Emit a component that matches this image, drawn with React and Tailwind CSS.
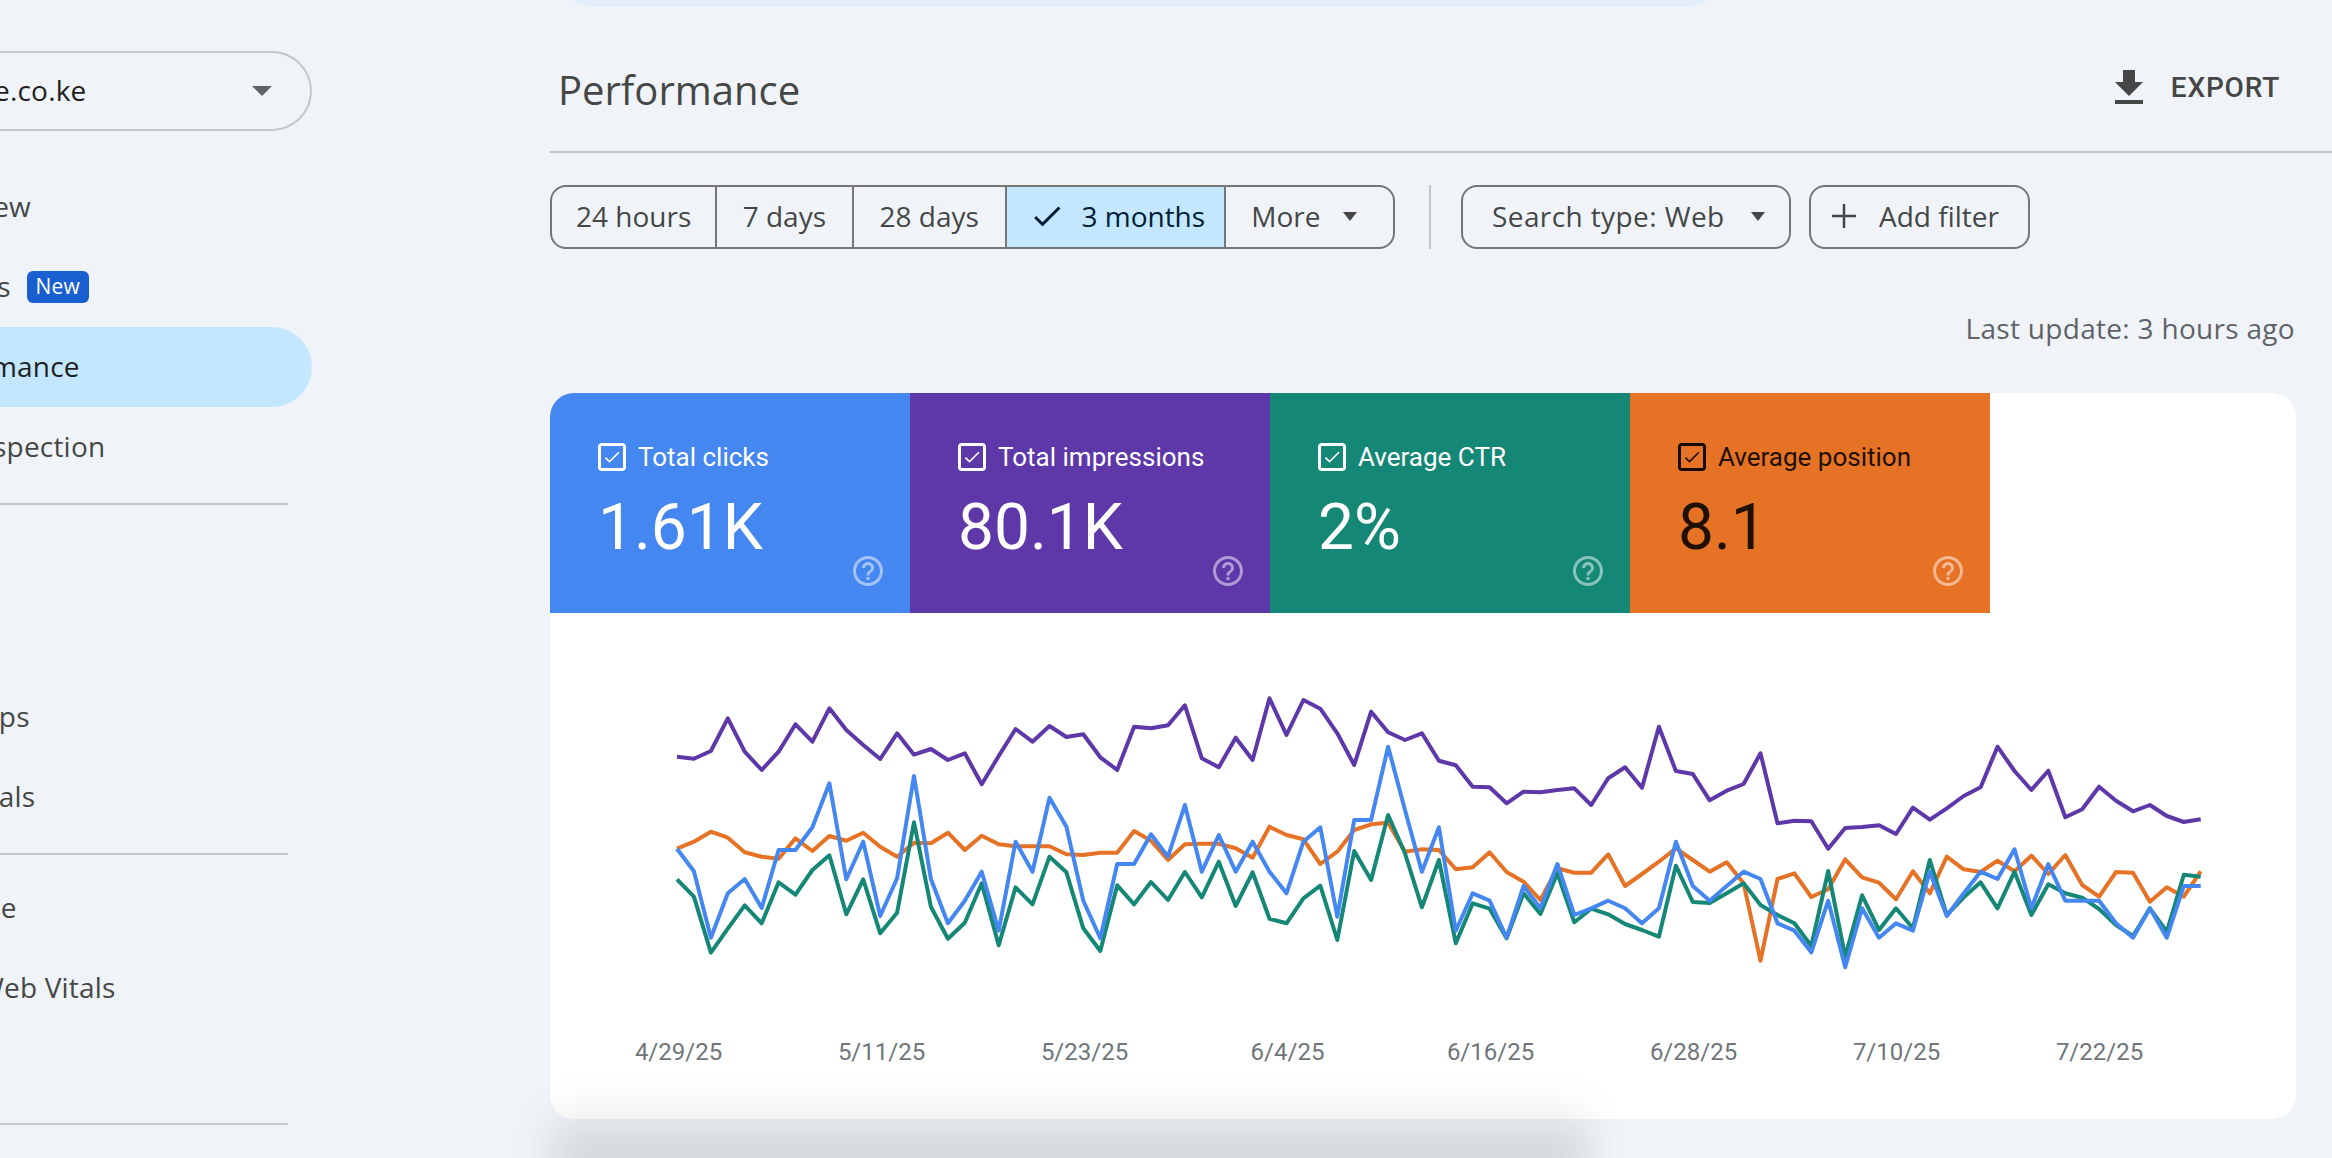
const purple = [260,266,243,145,245,300,245,163,215,115,180,225,267,190,254,237,270,250,343,258,177,215,168,201,193,262,300,170,175,166,106,265,292,203,270,85,195,90,116,190,285,125,187,210,190,272,286,350,352,400,365,367,360,355,405,325,292,353,170,303,312,391,362,342,250,460,452,454,536,474,471,466,492,413,449,415,378,352,230,303,360,302,442,418,350,392,424,405,438,456,448];
const orange = [536,515,485,503,547,560,566,505,543,498,512,488,530,560,518,520,488,540,497,523,529,529,529,553,555,548,548,483,512,570,523,521,521,535,563,470,495,508,582,545,480,463,458,545,538,540,598,592,547,606,635,690,595,608,608,553,648,612,575,535,570,605,577,640,872,627,610,681,658,568,622,638,688,604,670,560,598,606,572,604,557,612,555,645,680,606,608,695,652,680,604];
const green = [628,680,848,776,706,760,637,674,600,556,733,628,790,728,457,710,806,758,640,826,652,703,560,607,775,843,646,703,636,690,606,682,575,708,607,746,760,685,647,810,543,630,435,550,712,570,820,700,716,805,670,732,610,757,716,733,762,780,800,587,696,699,670,640,705,735,760,828,603,860,676,780,715,775,570,735,682,637,715,605,735,643,670,683,717,765,798,715,785,614,620];
const blue = [536,604,803,670,627,714,540,540,472,340,628,515,738,625,318,627,760,692,605,782,515,605,383,470,692,805,582,582,493,560,405,605,495,605,515,605,670,515,472,740,450,450,230,420,605,472,782,670,692,803,648,715,582,735,715,692,715,760,715,515,648,692,648,605,627,760,782,847,692,892,715,803,760,782,605,738,670,605,627,538,715,582,692,692,692,760,803,715,803,648,648];

const toPoints = (series) =>
  series.map((v, i) => `${(127 + 16.93 * i).toFixed(1)},${(57 + v / 3).toFixed(1)}`).join(' ');

const dates = ['4/29/25', '5/11/25', '5/23/25', '6/4/25', '6/16/25', '6/28/25', '7/10/25', '7/22/25'];

const Caret = ({ className }) => (
  <svg className={className} viewBox="0 0 14 9" fill="currentColor" preserveAspectRatio="none">
    <path d="M0 0h14L7 9z" />
  </svg>
);

const NavRow = ({ label, heading, active, badge }) => (
  <div
    className={`flex items-center h-[80px] text-[28px] rounded-r-full ${heading ? 'pl-[71px]' : 'pl-[108px]'} ${active ? 'bg-[#c2e7ff] text-[#1f1f1f]' : 'text-[#444746]'}`}
  >
    <span className="pb-[2px]">{label}</span>
    {badge && (
      <span className="ml-[16px] flex items-center justify-center w-[62px] h-[32px] rounded-[6px] bg-[#1a5fd0] text-white text-[21px] font-medium">
        {badge}
      </span>
    )}
  </div>
);

const Segment = ({ width, active, children }) => (
  <div
    className={`flex items-center justify-center pb-[2px] border-l-2 first:border-l-0 border-[#747775] ${width} ${active ? 'bg-[#c2e7ff] text-[#001d35]' : ''}`}
  >
    {children}
  </div>
);

const Tile = ({ label, value, bg, dark }) => (
  <div className={`relative w-[360px] h-[220px] pl-[48px] pt-[50px] ${bg} ${dark ? 'text-[#1f1000]' : 'text-white'}`}>
    <div className="flex items-center h-[28px]">
      <span className={`flex items-center justify-center w-[28px] h-[28px] border-[3px] rounded-[4px] ${dark ? 'border-[#140a00]' : 'border-white'}`}>
        <svg className="w-[20px] h-[20px]" viewBox="0 0 24 24" fill="currentColor">
          <path d="M9 16.2L4.8 12l-1.4 1.4L9 19 21 7l-1.4-1.4L9 16.2z" />
        </svg>
      </span>
      <span className="ml-[12px] text-[26px]">{label}</span>
    </div>
    <div className="mt-[19px] text-[64px] leading-[75px]">{value}</div>
    <svg className="absolute right-[24px] bottom-[24px] w-[36px] h-[36px] text-white opacity-50" viewBox="0 0 24 24" fill="currentColor">
      <path d="M11 18h2v-2h-2v2zm1-16C6.48 2 2 6.48 2 12s4.48 10 10 10 10-4.48 10-10S17.52 2 12 2zm0 18c-4.41 0-8-3.59-8-8s3.59-8 8-8 8 3.59 8 8-3.59 8-8 8zm0-14c-2.21 0-4 1.79-4 4h2c0-1.1.9-2 2-2s2 .9 2 2c0 2-3 1.75-3 5h2c0-2.25 3-2.5 3-5 0-2.21-1.79-4-4-4z" />
    </svg>
  </div>
);

export default function App() {
  return (
    <div className="relative flex h-screen w-full overflow-hidden bg-[#f0f4f9] font-['Roboto',sans-serif]">
      {/* Sidebar, scrolled partly off the left edge */}
      <aside className="shrink-0 w-[512px] ml-[-200px] mr-[238px] pt-[51px] font-['Open_Sans',sans-serif] tracking-[0.2px] font-[450]">
        <div className="flex items-center justify-between h-[80px] pl-[194px] pr-[38px] border-2 border-l-0 border-[#c4c7c5] rounded-r-full text-[28px] text-[#1f1f1f]">
          <span className="pb-[2px]">e.co.ke</span>
          <Caret className="w-[20px] h-[10px] text-[#5f6368]" />
        </div>

        <div className="mt-[36px]">
          <NavRow label="Overview" />
          <NavRow label="Insights" badge="New" />
          <NavRow label="Performance" active />
          <NavRow label="URL inspection" />
        </div>
        <div className="mt-[16px] mr-[24px] h-[2px] bg-[#c4c7c5]" />

        <div className="mt-[12px]">
          <NavRow label="Indexing" heading />
          <NavRow label="Pages" />
          <NavRow label="Sitemaps" />
          <NavRow label="Removals" />
        </div>
        <div className="mt-[16px] mr-[24px] h-[2px] bg-[#c4c7c5]" />

        <div className="mt-[13px]">
          <NavRow label="Experience" heading />
          <NavRow label="Core Web Vitals" />
          <NavRow label="HTTPS" />
        </div>
        <div className="mt-[15px] mr-[24px] h-[2px] bg-[#c4c7c5]" />
      </aside>

      <main className="flex-1 min-w-0">
        {/* Search bar, scrolled off the top */}
        <div className="ml-[4px] mt-[-80px] w-[1172px] h-[87px] rounded-[40px] bg-[#e4edfa]" />

        <div className="flex items-center justify-between h-[146px] pt-[22px] pl-[8px] border-b-2 border-[#c4c7c5]">
          <h1 className="text-[40px] text-[#444746] font-['Open_Sans',sans-serif]">Performance</h1>
          <div className="flex items-center mr-[52px] mb-[5px] text-[#444746]">
            <svg className="w-[48px] h-[48px]" viewBox="0 0 24 24" fill="currentColor">
              <path d="M19 9h-4V3H9v6H5l7 7 7-7zM5 18v2h14v-2H5z" />
            </svg>
            <span className="ml-[18px] text-[28px] font-medium tracking-[0.8px]">EXPORT</span>
          </div>
        </div>

        <div className="flex items-center mt-[32px] text-[28px] text-[#444746] font-['Open_Sans',sans-serif] font-[450]">
          <div className="flex h-[64px] w-[845px] border-2 border-[#747775] rounded-[16px] overflow-hidden">
            <Segment width="w-[164px]">24 hours</Segment>
            <Segment width="w-[137px]">7 days</Segment>
            <Segment width="w-[154px]">28 days</Segment>
            <Segment width="w-[220px] pl-[4px]" active>
              <svg className="w-[36px] h-[36px] mr-[16px]" viewBox="0 0 24 24" fill="currentColor">
                <path d="M9 16.2L4.8 12l-1.4 1.4L9 19 21 7l-1.4-1.4L9 16.2z" />
              </svg>
              3 months
            </Segment>
            <Segment width="w-[170px] pr-[10px]">
              More
              <Caret className="ml-[23px] w-[14px] h-[9px]" />
            </Segment>
          </div>
          <div className="ml-[34px] w-[2px] h-[64px] bg-[#c4c7c5]" />
          <div className="flex items-center justify-between ml-[30px] w-[330px] h-[64px] pl-[29px] pr-[24px] pb-[2px] border-2 border-[#747775] rounded-[16px]">
            <span className="tracking-[0.4px]">Search type: Web</span>
            <Caret className="w-[14px] h-[9px]" />
          </div>
          <div className="flex items-center ml-[18px] w-[221px] h-[64px] pl-[20px] pb-[2px] border-2 border-[#747775] rounded-[16px]">
            <svg className="w-[26px] h-[26px] mr-[22px]" viewBox="0 0 26 26" stroke="currentColor" strokeWidth="2.5" fill="none">
              <path d="M13 1v24M1 13h24" />
            </svg>
            Add filter
          </div>
        </div>

        <div className="mt-[61px] mb-[47px] pr-[37px] text-right text-[28px] leading-[36px] tracking-[0.3px] text-[#5f6368] font-['Open_Sans',sans-serif]">
          Last update: 3 hours ago
        </div>

        {/* Metrics card */}
        <div className="w-[1746px] h-[726px] rounded-[24px] bg-white overflow-hidden">
          <div className="flex">
            <Tile label="Total clicks" value="1.61K" bg="bg-[#4587f0]" />
            <Tile label="Total impressions" value="80.1K" bg="bg-[#5e37a9]" />
            <Tile label="Average CTR" value="2%" bg="bg-[#158776]" />
            <Tile label="Average position" value="8.1" bg="bg-[#e67225]" dark />
          </div>
          <svg className="block w-[1746px] h-[410px]" viewBox="0 0 1746 410" fill="none" strokeWidth="4" strokeLinejoin="round">
            <polyline points={toPoints(purple)} stroke="#5e37a9" />
            <polyline points={toPoints(orange)} stroke="#e67225" />
            <polyline points={toPoints(green)} stroke="#158776" />
            <polyline points={toPoints(blue)} stroke="#4587f0" />
          </svg>
          <div className="flex mt-[15px] pl-[27px] text-[24px] leading-[28px] text-[#70757a]">
            {dates.map((d) => (
              <span key={d} className="w-[203px] text-center">{d}</span>
            ))}
          </div>
        </div>
      </main>

      {/* Shadow of a panel sitting just below the fold */}
      <div className="absolute left-[552px] top-[1095px] w-[1036px] h-[80px] blur-[18px] bg-[linear-gradient(to_bottom,transparent,rgba(0,0,0,0.165))]" />
    </div>
  );
}
